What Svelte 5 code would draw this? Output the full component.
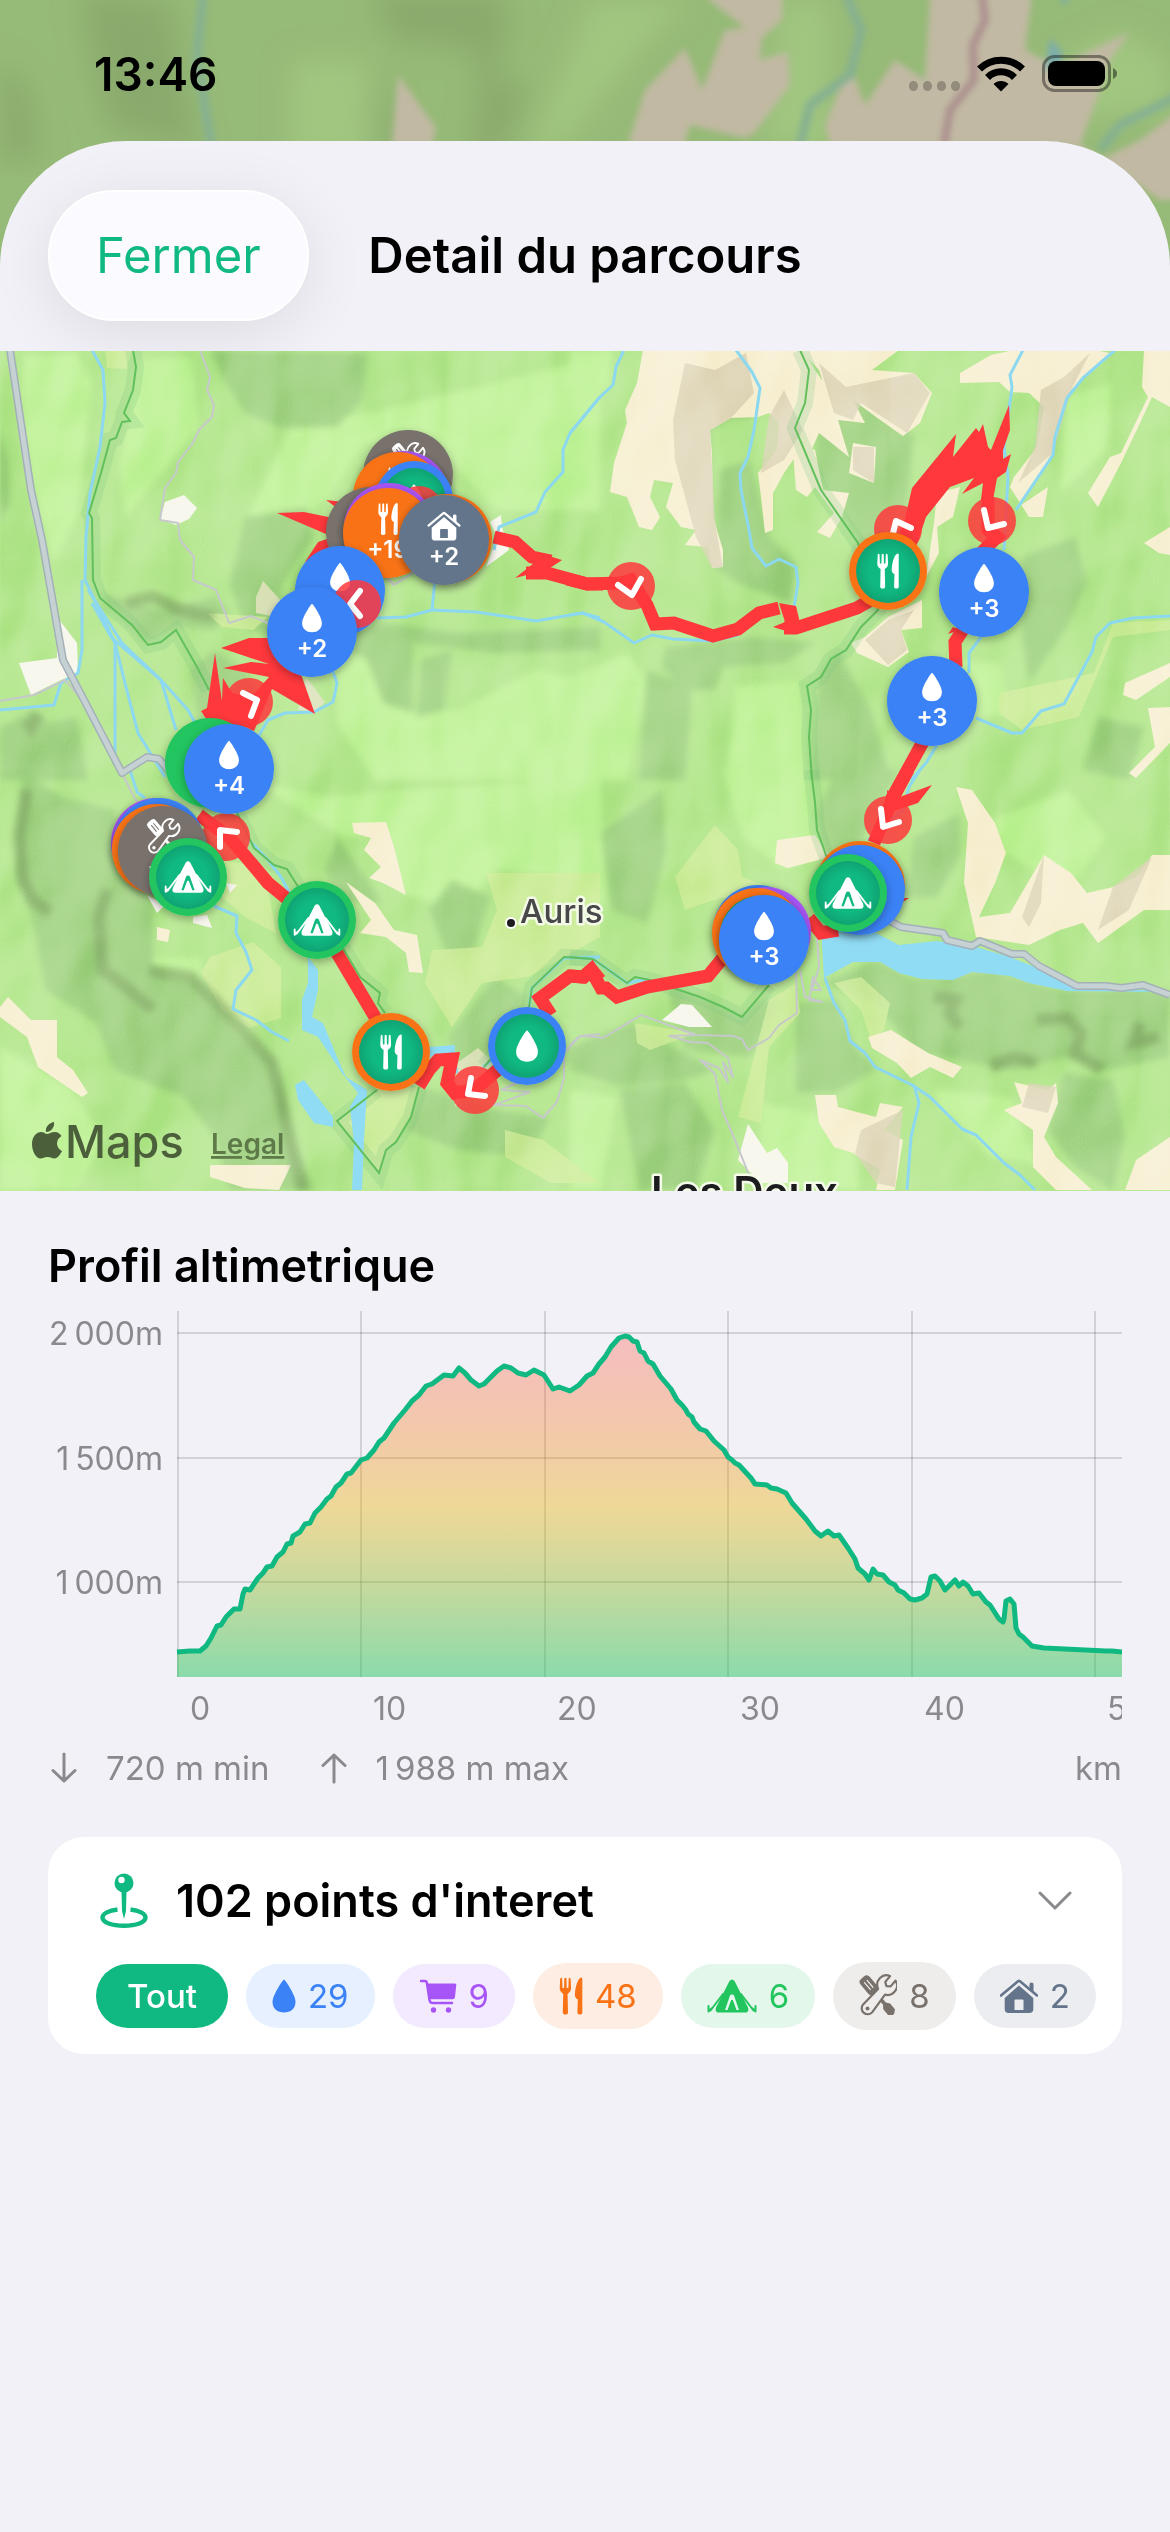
<script>
  // The map is surveyed in four tiles; each one has its own origin on the map
  // and a common grid of 1568 x 1260 survey units.
  const tiles = {
    nw: [0, -1],
    ne: [570, -1],
    sw: [0, 419],
    se: [570, 419]
  };

  function project(tile, x, y) {
    const [ox, oy] = tiles[tile];
    return [Math.round(ox + (x * 600) / 1568), Math.round(oy + y / 3)];
  }

  function points(tile, list) {
    return list
      .split(' ')
      .map((pair) => project(tile, ...pair.split(',').map(Number)).join(','))
      .join(' ');
  }

  const relief = {
    dark: [
      ['nw', '550,0 960,10 945,150 880,230 740,235 640,190 590,100'],
      ['nw', '640,500 800,470 820,560 740,700 720,860 640,830 600,700'],
      ['nw', '0,1130 80,1085 130,1120 200,1100 230,1290 0,1290'],
      ['nw', '820,850 1000,820 1200,850 1568,830 1568,900 1300,910 1080,880 1080,1090 1000,1060 960,930'],
      ['nw', '260,730 420,780 560,740 600,790 560,840 460,830 388,880 330,820'],
      ['nw', '0,240 20,330 25,460 0,520'],
      ['nw', '500,960 560,900 640,960 700,1100 620,1180 520,1120'],
      ['nw', '1100,930 1180,900 1160,1080 1090,1100'],
      ['ne', '270,60 400,10 470,120 480,200 420,205 365,240 375,500 300,400'],
      ['ne', '390,360 470,330 520,560 590,640 580,760 440,700 380,650'],
      ['ne', '650,30 760,130 900,260 800,290 800,400 740,380 760,580 640,370'],
      ['ne', '1240,0 1370,0 1300,120 1260,310 1180,400 1220,290'],
      ['ne', '250,890 480,860 640,880 560,940 400,950 380,1020 300,1020 240,950'],
      ['ne', '200,960 320,1010 300,1290 180,1290'],
      ['ne', '650,980 700,900 790,1090 840,1290 630,1290'],
      ['ne', '750,300 900,250 880,480 760,580 720,400'],
      ['ne', '1180,620 1320,560 1350,700 1300,830 1200,1000 1180,860'],
      ['ne', '1380,1100 1500,1130 1460,1290 1340,1260'],
      ['sw', '60,0 160,80 300,120 310,300 400,400 400,600 520,640 620,790 720,890 760,1100 820,1260 600,1260 560,1100 480,980 300,900 250,760 120,660 80,430 45,310'],
      ['sw', '420,860 560,820 680,900 700,1000 560,1060 480,960'],
      ['sw', '880,200 1000,400 900,400 850,300'],
      ['sw', '1180,330 1280,380 1240,540 1170,560 1120,420'],
      ['sw', '1170,800 1290,620 1380,680 1300,830 1200,900'],
      ['sw', '1100,950 1300,1020 1440,1040 1380,1160 1200,1140 1060,1080'],
      ['se', '660,640 800,570 900,630 1100,600 1280,660 1568,660 1568,860 1400,900 1300,860 1160,900 900,850 800,700'],
      ['se', '590,700 700,690 740,820 800,900 690,970 590,970'],
      ['se', '80,190 240,60 250,240 200,460 110,420'],
      ['se', '250,640 450,740 500,690 560,690 470,860 300,840'],
      ['se', '0,830 160,760 300,850 380,900 300,930 140,950 0,900'],
      ['se', '130,960 300,940 380,1080 330,1260 180,1260'],
      ['se', '1290,910 1420,930 1450,1100 1420,1260 1320,1190 1250,1080'],
      ['se', '900,200 1020,130 1020,260 960,380 880,380'],
      ['se', '700,0 860,0 760,210 660,250 640,130']
    ],
    light: [
      ['nw', '760,230 1000,180 1568,20 1568,480 1300,480 1150,300 950,280 860,440 720,560 640,520'],
      ['nw', '880,880 1060,880 1070,1090 1200,1080 1400,960 1568,1000 1568,1290 980,1290 880,1120'],
      ['nw', '60,20 200,10 240,100 200,500 140,640 60,300'],
      ['nw', '360,30 500,20 520,230 400,400 330,500 310,350'],
      ['ne', '0,0 110,0 100,110 0,240'],
      ['ne', '0,980 150,910 200,990 150,1290 80,1290 0,1200'],
      ['ne', '430,1010 600,990 620,1290 410,1290'],
      ['ne', '1300,140 1420,100 1400,300 1280,430'],
      ['ne', '900,920 1120,940 1150,1090 1060,1100'],
      ['sw', '640,20 850,80 1050,60 1568,20 1568,330 1300,300 1200,420 1050,370 1000,190 900,200'],
      ['sw', '300,560 520,560 560,760 460,820 330,740'],
      ['sw', '0,830 180,950 270,1100 200,1260 0,1260'],
      ['se', '10,0 80,20 90,400 0,440'],
      ['se', '400,0 630,0 660,240 560,300 450,200'],
      ['se', '1100,150 1300,60 1400,200 1300,370 1130,240'],
      ['se', '0,960 120,980 80,1260 0,1260'],
      ['se', '950,960 1150,980 1220,1180 1100,1160 960,1000'],
      ['se', '500,1000 640,1030 740,1140 760,1260 500,1260']
    ]
  };

  const fields = [
    ['nw', '275,0 345,0 330,58 280,55'],
    ['sw', '550,560 660,515 735,590 735,745 650,775 580,720 525,610'],
    ['sw', '1270,310 1568,310 1568,500 1380,620 1260,640 1180,770 1110,640 1130,540 1260,530 1300,420'],
    ['sw', '450,250 690,290 720,490 640,440'],
    ['sw', '1320,1080 1420,1110 1568,1240 1440,1240 1320,1160'],
    ['sw', '880,1052 985,960 1095,950 1075,1040 1035,1115 1010,1140 990,1208'],
    ['se', '275,320 380,165 440,240 450,320 520,350 490,480 400,380 300,420'],
    ['se', '480,860 520,690 590,640 600,730 520,830 500,1060 440,1040'],
    ['se', '690,640 760,620 835,700 820,780 790,820 760,720'],
    ['se', '170,760 330,790 210,840 175,820'],
    ['ne', '1120,1030 1370,970 1420,820 1568,810 1568,840 1420,860 1330,1100 1180,1140 1120,1090'],
    ['nw', '540,790 700,800 660,840 580,830']
  ];

  const scree = [
    ['ne', '190,0 610,0 640,60 700,160 770,220 700,210 730,320 650,250 620,330 600,300 560,370 530,430 530,540 510,550 500,440 490,370 540,300 545,220 520,190 490,200 420,205 365,240 370,310 375,500 400,600 400,650 370,655 360,590 300,585 330,540 290,530 250,470 270,400 220,390 210,440 235,500 215,540 180,530 150,440 105,425 115,340 150,220 145,180 175,100'],
    ['ne', '600,0 860,0 790,60 900,70 945,130 915,220 870,258 800,200 740,150 770,220 690,200 650,60'],
    ['ne', '580,270 640,300 660,420 730,430 710,500 680,565 645,545 690,490 640,410 620,440 590,420'],
    ['ne', '740,280 800,290 795,400 730,370'],
    ['ne', '1020,70 1100,15 1160,0 1370,0 1410,10 1310,120 1270,230 1262,310 1170,470 1250,410 1235,500 1200,500 1150,410 1160,380 1220,290 1240,170 1200,130 1150,125 1120,95 1020,100'],
    ['ne', '1500,0 1568,0 1568,170 1520,140 1490,220 1440,340 1380,470 1355,430 1410,320 1440,310 1510,140 1495,110'],
    ['ne', '1500,580 1568,530 1568,615 1540,610'],
    ['ne', '960,430 1020,410 1000,500 960,530 965,610 930,680 950,520'],
    ['ne', '770,860 830,800 920,750 920,835 865,840 885,905 830,950 750,910 735,880'],
    ['ne', '1450,1000 1568,940 1568,980 1480,1050 1445,1035'],
    ['ne', '1510,1075 1568,1070 1568,1180 1480,1285 1460,1270 1530,1190'],
    ['se', '1010,50 1050,60 1110,160 1140,250 1110,340 1070,440 1150,430 1240,255 1310,310 1350,370 1420,350 1480,320 1520,255 1568,255 1568,420 1500,420 1380,520 1340,460 1280,480 1200,525 1060,500 1030,340 1040,160'],
    ['se', '540,210 640,195 680,260 570,295 535,280'],
    ['se', '780,800 840,780 935,850 1025,890 1000,925 940,890 890,925 855,880 790,835'],
    ['se', '640,975 695,975 700,1010 800,1040 810,1000 870,1010 820,1080 870,1110 850,1260 800,1260 810,1200 740,1150 690,1130 650,1060'],
    ['se', '1160,935 1250,960 1270,940 1275,1000 1240,1100 1270,1160 1365,1260 1270,1260 1210,1190 1210,1080 1135,1020 1180,1000'],
    ['se', '1480,1170 1568,1100 1568,1260 1450,1260'],
    ['sw', '920,160 1010,155 1030,230 1060,375 1000,340 965,325 995,290 950,240 970,205 925,190'],
    ['sw', '905,335 980,400 1030,480 1090,495 1105,610 1070,605 1060,550 1010,500 940,490 970,450'],
    ['sw', '410,470 445,480 440,515 410,510'],
    ['sw', '550,1185 760,1185 730,1260 640,1255 550,1220'],
    ['sw', '20,680 80,750 150,750 150,860 190,900 230,970 215,980 100,890 70,800 0,740 0,710']
  ];

  const screeShade = [
    ['ne', '300,40 380,60 460,10 480,130 420,205 365,240 380,520 400,650 370,655 330,560 275,330 270,210'],
    ['ne', '650,40 720,110 900,70 940,130 880,250 760,160 740,210 690,190'],
    ['ne', '1230,120 1290,80 1360,10 1310,120 1262,310 1170,400 1215,290'],
    ['ne', '520,200 560,120 610,240 560,330 500,370'],
    ['ne', '740,290 795,290 795,400 740,360'],
    ['ne', '770,870 830,810 900,780 865,840 880,900 830,945'],
    ['se', '1180,440 1240,255 1230,400 1200,470'],
    ['se', '1420,350 1520,260 1460,420 1380,480'],
    ['se', '760,1080 870,1020 850,1250 800,1240 745,1150'],
    ['se', '1200,940 1270,950 1250,1030 1180,1010']
  ];

  const ridges = [
    ['sw', '70,60 60,120 50,200 60,330 85,390 130,430'],
    ['sw', '280,360 260,440 270,600 330,650 400,720'],
    ['sw', '390,600 500,620 560,690 640,790 710,880 740,1010 790,1260'],
    ['se', '950,680 1010,690 990,730 1020,770'],
    ['se', '1220,750 1300,745 1335,790 1320,850 1390,900'],
    ['se', '1100,890 1160,860 1220,880'],
    ['se', '1490,760 1470,820 1540,800'],
    ['nw', '330,760 400,740 470,780 560,800'],
    ['nw', '70,1110 80,1130 100,1090']
  ];

  const villages = [
    ['nw', '430,455 480,435 515,475 495,508 460,525 418,508'],
    ['nw', '50,940 150,925 150,800 200,880 205,970 160,990 80,1035'],
    ['nw', '1280,515 1310,495 1312,530 1330,600 1270,650 1300,560'],
    ['sw', '385,375 430,405 410,430'],
    ['sw', '505,440 540,435 555,475 505,460'],
    ['sw', '590,340 620,345 600,370'],
    ['se', '240,750 290,702 320,705 370,772 310,770'],
    ['se', '465,1062 515,1150 540,1135 570,1180 570,1240 500,1240 440,1170']
  ];

  const hamlets = [
    ['nw', '780,1080 800,980 850,1055 820,1085'],
    ['nw', '670,740 688,692 740,760 720,800 670,790'],
    ['sw', '1195,880 1250,835 1290,880 1240,940 1190,1010']
  ];

  const lakes = [
    ['se', '655,470 800,490 860,525 960,512 1060,530 1150,560 1320,640 1450,655 1540,665 1300,663 1200,640 1150,618 1050,605 1000,630 920,628 860,610 810,575 740,575 665,625'],
    ['sw', '805,560 830,600 830,660 815,740 845,760 880,860 905,920 960,960 950,1110 945,1260 920,1260 925,1120 915,1010 935,970 895,910 830,800 790,780 790,690 805,640'],
    ['sw', '770,945 795,930 870,1040 870,1070 820,1060 780,990'],
    ['sw', '1120,830 1190,826 1190,850 1120,860']
  ];

  const rivers = [
    ['nw', '240,0 268,60 275,160 262,290 235,430 225,560 222,690 300,880 300,1240'],
    ['nw', '215,690 215,900 205,970 160,1000 140,1065 0,1080'],
    ['nw', '240,760 290,860 420,990 460,1140'],
    ['nw', '230,720 320,880 420,990 490,1080 530,1160'],
    ['nw', '300,880 330,1010 360,1150 430,1280'],
    ['nw', '1568,140 1490,250 1470,300 1470,365 1425,425 1400,485 1305,530 1290,600'],
    ['nw', '985,805 1060,800 1130,780 1245,787 1400,812 1520,790 1568,805'],
    ['nw', '1137,690 1130,780'],
    ['nw', '870,965 880,1000 870,1055 820,1085 745,1090 700,1110 675,1160'],
    ['ne', '140,0 120,50 112,105 75,145 0,250'],
    ['ne', '435,0 475,65 497,115 480,240 465,320 445,370 447,420 468,540 475,595 512,648 545,628 590,652 595,700 585,770'],
    ['ne', '0,795 35,790 90,815 168,878 215,855 270,868 375,873 440,855'],
    ['ne', '1185,0 1150,75 1155,110 1135,290 1145,380 1135,600'],
    ['ne', '1423,0 1340,85 1300,145 1268,260 1262,315 1165,480'],
    ['ne', '1075,860 1042,910 1042,970'],
    ['ne', '1568,797 1470,805 1412,820 1375,860 1365,905 1290,1062 1230,1082 1180,1150 1155,1150 1060,1105'],
    ['ne', '960,1185 930,1240 890,1290'],
    ['se', '915,0 885,50 870,120 780,210'],
    ['se', '667,625 690,700 718,750 732,812 770,850 798,892 895,945 940,980 1025,1078 1062,1095 1135,1180 1175,1215 1215,1260'],
    ['se', '898,945 912,1000 890,1100 880,1260'],
    ['sw', '340,0 358,65 380,85'],
    ['sw', '560,408 620,437 617,490 642,545 658,600 618,660 608,718 670,750 710,785 755,812'],
    ['sw', '650,210 700,270 735,320 755,365'],
    ['sw', '1383,710 1390,655 1475,565 1568,562'],
    ['se', '0,560 60,567 150,638 200,628'],
    ['sw', '1180,840 1195,910'],
    ['sw', '1285,870 1262,890']
  ];

  const borders = [
    ['nw', '348,0 355,50 348,120 325,190 340,212 318,215 302,265 288,270 265,370 232,490 240,505 242,690 262,745 345,825 388,886 420,875 460,840 515,950 545,1020'],
    ['ne', '602,0 625,60 615,160 588,235 655,420 752,580 805,780 760,830 720,900 683,928 655,980 620,1008 630,1080 625,1160 632,1290'],
    ['se', '630,0 640,95 645,180 672,265'],
    ['sw', '620,130 665,235 715,285 750,298 775,345 850,480 900,540 940,620 992,668 988,700 1005,730'],
    ['sw', '985,960 880,1052 990,1208 1010,1140 1035,1115 1075,1040 1095,950'],
    ['sw', '1265,890 1280,870 1383,710 1390,655 1475,560 1550,567'],
    ['se', '0,560 60,567 150,638 170,622 210,630 300,665 340,682 400,710 450,742 520,645']
  ];

  const tracks = [
    ['nw', '522,0 550,80 540,120 558,165 553,200 520,240 505,280 465,335 460,370 430,415 418,510 465,520 470,570 508,620 505,690 565,720 598,818 655,797 700,820'],
    ['nw', '0,1052 90,1035 170,990 205,1035'],
    ['nw', '320,1270 345,1330 365,1370'],
    ['nw', '1010,680 1030,705 1080,670'],
    ['sw', '1568,792 1515,797 1475,850 1475,925 1455,995 1420,1045 1375,1008 1290,1005 1385,965 1310,960 1380,925'],
    ['se', '0,825 25,797 70,802 85,805 185,735 330,795 425,798 450,808 465,840 520,805 545,765 592,728 590,600'],
    ['se', '330,795 260,797 315,817 360,820 412,865 425,920 400,875 412,935 390,895 340,870 380,912 397,1020 430,1110 468,1215'],
    ['se', '645,500 650,590 632,660 655,660 635,620 625,690 658,697 615,680 600,600']
  ];

  const roads = [
    ['nw', '25,0 80,420 110,570 165,930 220,1050 320,1268 385,1222 415,1228 440,1260'],
    ['se', '830,450 865,470 975,490 985,510 1050,528 1072,512 1155,552 1187,553 1225,588 1325,647 1400,647 1440,655 1497,645 1568,675']
  ];

  const route = [
    ['nw', '1290,562 1345,575 1390,620 1440,632'],
    ['nw', '1375,668 1430,670 1535,703 1575,702'],
    ['ne', '-8,687 45,703 130,700 160,690 200,765 222,822 272,818 375,858 440,838 495,790 545,775'],
    ['ne', '560,833 590,835 750,775 800,740'],
    ['ne', '868,580 900,500'],
    ['ne', '1092,440 1092,540 1115,560 1075,610'],
    ['ne', '1030,835 1007,875 1008,950'],
    ['ne', '925,1170 840,1350'],
    ['se', '882,0 845,85 795,220'],
    ['se', '700,480 655,490 625,445'],
    ['se', '410,550 360,618 200,650 122,680 95,655 80,655 55,600 35,622 0,617'],
    ['sw', '1568,630 1547,600 1525,620 1490,617 1412,685 1440,735'],
    ['sw', '1310,890 1240,960 1190,968 1168,940 1180,868 1145,870 1120,900 1095,947'],
    ['sw', '1010,800 980,740 880,550'],
    ['sw', '760,395 700,338 600,205 520,135']
  ];

  // Hairpins where the track doubles back on itself.
  const hairpins = [
    ['nw', '1400,605 1468,630 1430,660 1345,684 1395,640'],
    ['ne', '545,760 590,768 603,830 590,853 530,830 563,815'],
    ['ne', '872,520 895,415 1008,253 1002,322 1062,235 1068,245 1080,223 1092,290 1100,300 1148,165 1150,240 1132,300 1132,328 1152,313 1140,365 1115,385 1106,450 1075,450 1078,400 1025,432 1055,385 992,410 930,500 905,590 870,560'],
    ['se', '828,60 855,85 945,46 910,100 830,130'],
    ['nw', '525,1083 540,1075 562,908 580,1052 584,983 605,1030 655,1040 702,980 583,955 655,935 702,942 577,895 650,863 740,863 790,980 822,1092 710,1018 665,1142 640,1130 540,1110'],
    ['nw', '725,490 795,485 870,505 870,560'],
    ['nw', '852,450 900,455 880,475'],
    ['nw', '870,560 830,575 797,635 870,600'],
    ['ne', '1000,830 988,853 1020,840'],
    ['se', '870,385 885,385 870,395']
  ];

  const green = '#10b981';
  const blue = '#3b82f6';
  const orange = '#f97316';
  const purple = '#a855f7';
  const stone = '#78716c';
  const slate = '#64748b';
  const camp = '#22c55e';

  const pins = [
    ['cluster', 'nw', 1065, 374, stone, 'tools', ''],
    ['cluster', 'nw', 1055, 439, purple, '', ''],
    ['cluster', 'nw', 1041, 440, orange, 'fork', ''],
    ['poi', 'nw', 1083, 449, blue, 'drop', ''],
    ['arrow', 'nw', 1095, 480, '', '', '1080,510 1080,490 1095,480'],
    ['cluster', 'nw', 969, 545, stone, '', ''],
    ['cluster', 'nw', 1017, 535, purple, '', ''],
    ['cluster', 'nw', 1013, 549, orange, 'fork', '+19'],
    ['cluster', 'nw', 1168, 567, orange, '', ''],
    ['cluster', 'nw', 1161, 569, slate, 'house', '+2'],
    ['cluster', 'nw', 888, 722, blue, 'drop', ''],
    ['arrow', 'nw', 933, 762, '', '', '942,722 915,762 942,797'],
    ['cluster', 'nw', 815, 846, blue, 'drop', '+2'],
    ['arrow', 'nw', 652, 1055, '', '', '634,1028 672,1049 656,1098'],
    ['cluster', 'nw', 548, 1238, camp, '', ''],
    ['arrow', 'sw', 590, 200, '', '', '620,186 574,181 574,232'],
    ['cluster', 'nw', 598, 1256, blue, 'drop', '+4'],
    ['cluster', 'sw', 407, 219, purple, '', ''],
    ['cluster', 'sw', 415, 220, blue, '', ''],
    ['cluster', 'sw', 411, 236, orange, '', ''],
    ['cluster', 'sw', 425, 242, stone, 'tools', '+5'],
    ['poi', 'sw', 491, 321, camp, 'tent', ''],
    ['poi', 'sw', 828, 450, camp, 'tent', ''],
    ['poi', 'sw', 1022, 845, orange, 'fork', ''],
    ['arrow', 'sw', 1242, 960, '', '', '1231,923 1223,973 1268,979'],
    ['poi', 'sw', 1378, 828, blue, 'drop', ''],
    ['cluster', 'se', 490, 481, blue, '', ''],
    ['cluster', 'se', 512, 487, purple, '', ''],
    ['cluster', 'se', 489, 489, orange, '', ''],
    ['poi', 'se', 495, 495, '#0c9a70', '', ''],
    ['cluster', 'se', 507, 510, blue, 'drop', '+3'],
    ['arrow', 'se', 831, 150, '', '', '812,118 819,171 860,157'],
    ['cluster', 'se', 757, 348, orange, '', ''],
    ['cluster', 'se', 758, 360, blue, '', ''],
    ['poi', 'se', 726, 369, camp, 'tent', ''],
    ['arrow', 'ne', 857, 537, '', '', '843,550 853,513 892,535'],
    ['poi', 'ne', 831, 663, orange, 'fork', ''],
    ['arrow', 'ne', 1103, 513, '', '', '1083,480 1092,533 1133,521'],
    ['cluster', 'ne', 1082, 726, blue, 'drop', '+3'],
    ['cluster', 'ne', 946, 1053, blue, 'drop', '+3'],
    ['arrow', 'ne', 160, 708, '', '', '125,704 163,734 185,688']
  ].map(([kind, tile, x, y, color, icon, extra]) => {
    const [cx, cy] = project(tile, x, y);
    return { kind, tile, cx, cy, color, icon, extra };
  });

  const profileTrace =
    '177,1652 190,1651 200,1651 206,1646 211,1638 217,1626 221,1625 226,1617 234,1609 240,1609 243,1594 245,1589 250,1590 258,1578 263,1573 267,1567 272,1566 277,1557 283,1552 287,1544 291,1543 293,1536 300,1532 305,1524 310,1523 315,1513 321,1507 327,1499 331,1496 336,1487 341,1483 347,1474 351,1473 361,1460 367,1458 374,1450 379,1442 384,1438 394,1423 405,1410 412,1401 419,1395 426,1386 432,1384 444,1375 453,1376 459,1368 465,1373 471,1380 479,1386 484,1384 497,1371 504,1366 511,1368 518,1373 526,1375 534,1370 544,1375 553,1389 559,1387 570,1391 579,1385 587,1376 593,1373 599,1364 605,1357 611,1347 619,1338 625,1336 629,1337 633,1341 637,1342 640,1351 644,1353 648,1361 653,1364 660,1376 671,1389 677,1400 682,1405 686,1410 688,1414 692,1417 694,1422 700,1429 706,1431 714,1441 724,1450 728,1457 732,1460 735,1463 739,1465 751,1478 755,1484 767,1485 771,1488 777,1489 786,1493 792,1503 806,1519 815,1531 821,1536 828,1531 834,1536 839,1535 848,1548 855,1559 858,1568 865,1574 869,1580 873,1569 877,1574 883,1575 889,1582 895,1585 898,1590 904,1593 910,1599 915,1600 922,1598 927,1594 931,1577 935,1576 940,1581 945,1590 955,1580 959,1586 963,1582 968,1586 973,1594 979,1593 986,1602 990,1605 999,1619 1003,1622 1004,1619 1006,1601 1010,1599 1014,1604 1016,1628 1019,1634 1023,1637 1032,1646 1044,1648 1106,1651 1112,1651 1122,1652';

  const profile = profileTrace
    .split(' ')
    .map((pair) => {
      const [x, y] = pair.split(',').map(Number);
      return `${x - 48},${y - 1311}`;
    })
    .join(' ');

  const elevations = [
    ['2\u2009000m', 22],
    ['1\u2009500m', 147],
    ['1\u2009000m', 271]
  ];

  const distances = [0, 10, 20, 30, 40, 50];

  const filters = [
    { icon: 'drop', count: 29, label: "Points d'eau", tone: 'water', w: 24, h: 34 },
    { icon: 'cart', count: 9, label: 'Commerces', tone: 'shop', w: 38, h: 34 },
    { icon: 'fork', count: 48, label: 'Restaurants', tone: 'food', w: 24, h: 42 },
    { icon: 'tent', count: 6, label: 'Campings', tone: 'camp', w: 50, h: 34 },
    { icon: 'tools', count: 8, label: 'Ateliers', tone: 'repair', w: 38, h: 44 },
    { icon: 'house', count: 2, label: 'Hébergements', tone: 'lodging', w: 38, h: 34 }
  ];
</script>

{#snippet glyph(name, back)}
  {#if name === 'drop'}
    <path fill="currentColor" d="M0-16.5C1-16.5 11.5-1 11.5 6C11.5 12.5 6.5 16.5 0 16.5S-11.5 12.5-11.5 6C-11.5-1-1-16.5 0-16.5Z" />
  {:else if name === 'fork'}
    <g fill="currentColor">
      <path d="M-11.3-8L-10.8-17.5Q-9.8-19-8.9-17.5L-8.5-8H-6.9L-6.7-17.5Q-5.6-19-4.5-17.5L-4.3-8H-2.7L-2.3-17.5Q-1.4-19-.4-17.5L.1-8C.1-5-1.5-3.5-3.4-2L-3 16.5C-3 19.2-8.2 19.2-8.2 16.5L-7.8-2C-9.7-3.5-11.3-5-11.3-8Z" />
      <path d="M11.3-17V16.5C11.3 19.2 6.4 19.2 6.4 16.5L6.8 3.5C4.5 2 3.8 1 3.9-2C4.2-9 7-18.5 10.5-18.5Q11.3-18.5 11.3-17Z" />
    </g>
  {:else if name === 'tent'}
    <path
      fill="currentColor"
      fill-rule="evenodd"
      d="M-2.5-15Q0-18 2.5-15L16 11.5Q17.5 16.5 13 16.5H-13Q-17.5 16.5-16 11.5ZM0-1.5Q-1.5-1.5-2-.5L-7 14H-4.5L-.8 4H.8L4.5 14H7L2-.5Q1.500-1.5 0-1.5Z"
    />
    <path fill="none" stroke="currentColor" stroke-width="2" stroke-linecap="round" stroke-linejoin="round" d="M-9-2L-21.5 14.5M9-2L21.5 14.5M-23.5 10V15.5L-20 12M23.5 10V15.5L20 12" />
  {:else if name === 'house'}
    <path fill="none" stroke="currentColor" stroke-width="2.6" stroke-linecap="round" stroke-linejoin="round" d="M-18-.5L-1-14.8Q0-15.6 1-14.8L18-.5" />
    <path
      fill="currentColor"
      fill-rule="evenodd"
      d="M10.5-12Q10.5-13.5 12.5-13.5T14.5-12V-4L10.5-7.5ZM0-10.5L14.3 2V13Q14.3 17 10.3 17H-10.3Q-14.3 17-14.3 13V2ZM-3.5 3.5Q-4.5 3.5-4.5 4.5V14H4.5V4.5Q4.5 3.5 3.5 3.5Z"
    />
  {:else if name === 'cart'}
    <path fill="none" stroke="currentColor" stroke-width="2.4" stroke-linecap="round" stroke-linejoin="round" d="M-17-15H-13Q-11.5-15-11.2-13.5L-8.5 4Q-8 7-5.5 7H14" />
    <path fill="currentColor" d="M-11.5-12.5H17Q18.5-12.5 18.3-11L17 1Q16.8 3.3 14.5 3.3H-8.5Z" />
    <circle cx="-4.5" cy="14" r="2.7" fill="currentColor" />
    <circle cx="10.5" cy="14" r="2.7" fill="currentColor" />
  {:else if name === 'tools'}
    <g transform="rotate(-40)">
      <rect x="-6" y="-24" width="12" height="20" rx="4" fill="currentColor" />
      <path d="M-1.7-19V-10M1.7-19V-10" stroke={back} stroke-width="1.2" stroke-linecap="round" />
      <path fill="currentColor" d="M-1.8-5H1.8V10L4.5 13.5V21L1 24H-1L-4.5 21V13.5L-1.8 10Z" />
    </g>
    <path
      transform="rotate(40)"
      fill={back}
      stroke="currentColor"
      stroke-width="2.2"
      stroke-linejoin="round"
      d="M-3.5-23C-11.5-21-12.5-9.5-4.5-5.5L-6 16A6 6 0 0 0 6 16L4.5-5.5C12.5-9.5 11.5-21 3.5-23V-15.5L0-13L-3.5-15.5Z"
    />
    <circle cx="-10.5" cy="12.5" r="2" fill="currentColor" />
  {/if}
{/snippet}

<div class="screen">
  <div class="backdrop">
    <svg class="backdrop-map" viewBox="0 0 1170 320" preserveAspectRatio="xMidYMin slice" aria-hidden="true">
      <defs>
        <filter id="soft"><feGaussianBlur stdDeviation="3" /></filter>
        <filter id="softer"><feGaussianBlur stdDeviation="14" /></filter>
      </defs>
      <rect width="1170" height="320" fill="#96ba77" />
      <g filter="url(#softer)">
        <path fill="#8aaa6d" d="M80-10L170 0L200 150L110 130L90 60ZM370-10H500L510 20L490 100L470 50L390 40ZM380 60L400 150L375 150ZM0 60L30 90L40 160H0ZM480 70L530 90L500 160H470Z" />
        <path fill="#a0c680" d="M290 60H370L370 160H290ZM590 0H690L650 40L560 150H530ZM780 0H830L830 160L760 140ZM1060 60L1120 30L1170 60V110L1080 120Z" />
      </g>
      <g filter="url(#soft)">
        <path fill="#c1b9a3" d="M703-5H783L782 20L762 38L760 60L788 52L790 85L755 132L745 138L690 125L684 145H628L645 90L685 48L702 90L725 30L745 28ZM930-5H1032L1025 50L1040 58L1060 65L1130 32L1110 60L1100 90L1080 145L1160 200H1180V110L1140 140L1090 165L1070 145H830L825 125L850 65L865 105L895 60L925 80ZM398 75L436 128L432 145H392Z" />
        <path fill="none" stroke="#86b191" stroke-width="9" d="M203-5L197 55L211 145M846-5L861 30L850 75L810 105L800 145M1180 95L1120 125L1100 150" />
        <path fill="none" stroke="#ac8d8e" stroke-width="8" d="M982-5L985 20L973 45L974 80L950 110L944 145" />
        <path fill="#7cadab" d="M1050 38L1062 52L1060 72L1045 70ZM1060-5H1070L1064 6Z" />
      </g>
    </svg>
    <header class="status">
      <span class="time">13:46</span>
      <span class="signals">
        <svg class="dots" viewBox="0 0 51 36" aria-hidden="true">
          <path d="M4.5 29.5V30.5M18.5 29.5V30.5M32.5 29.5V30.5M46.5 29.5V30.5" stroke="#000" stroke-opacity=".24" stroke-width="9" stroke-linecap="round" />
        </svg>
        <svg class="wifi" viewBox="0 0 50 36" aria-hidden="true">
          <path fill="none" stroke="#000" stroke-width="7" d="M3.5 13A30.5 30.5 0 0 1 46.5 13M11.5 21.5A19 19 0 0 1 38.5 21.5" />
          <path d="M25 35.5L17.5 28A10.6 10.6 0 0 1 32.5 28Z" />
        </svg>
        <svg class="battery" viewBox="0 0 76 38" aria-hidden="true">
          <rect x="1.5" y="1.5" width="66" height="34" rx="11" fill="none" stroke="#000" stroke-opacity=".4" stroke-width="3" />
          <rect x="6" y="6" width="57" height="25" rx="8" />
          <path d="M71 13Q75 15 75 18.5T71 24Z" fill-opacity=".45" />
        </svg>
      </span>
    </header>
  </div>

  <main class="sheet">
    <div class="bar">
      <button class="close" type="button">Fermer</button>
      <h1>Detail du parcours</h1>
    </div>

    <svg class="map" viewBox="0 0 1170 840" role="img" aria-label="Carte du parcours">
      <defs>
        <filter id="shade" x="-5%" y="-5%" width="110%" height="110%"><feGaussianBlur stdDeviation="3" /></filter>
        <filter id="ridge-blur" x="-5%" y="-5%" width="110%" height="110%"><feGaussianBlur stdDeviation="3" /></filter>
        <filter id="hills" x="0" y="0" width="100%" height="100%" color-interpolation-filters="sRGB">
          <feTurbulence type="fractalNoise" baseFrequency=".009 .006" numOctaves="3" seed="11" />
          <feDiffuseLighting surfaceScale="32" diffuseConstant="1" lighting-color="#fff">
            <feDistantLight azimuth="225" elevation="34" />
          </feDiffuseLighting>
        </filter>
        <filter id="drop-shadow" x="-30%" y="-30%" width="160%" height="160%">
          <feDropShadow dx="0" dy="3" stdDeviation="4" flood-color="#000" flood-opacity=".3" />
        </filter>
        <radialGradient id="poi-fill">
          <stop offset=".6" stop-color="#10b981" />
          <stop offset="1" stop-color="#0fa373" />
        </radialGradient>
      </defs>

      <rect width="1170" height="840" fill="#b8e893" />
      <g filter="url(#shade)">
        {#each relief.light as [tile, list]}
          <polygon fill="#c4f39e" points={points(tile, list)} />
        {/each}
        {#each relief.dark as [tile, list]}
          <polygon fill="#a6d588" points={points(tile, list)} />
        {/each}
      </g>
      {#each fields as [tile, list]}
        <polygon fill="#d3eea0" fill-opacity=".8" points={points(tile, list)} />
      {/each}
      {#each scree as [tile, list]}
        <polygon fill="#f7f0d4" points={points(tile, list)} />
      {/each}
      {#each screeShade as [tile, list]}
        <polygon fill="#ddd6ba" fill-opacity=".8" points={points(tile, list)} />
      {/each}
      {#each hamlets as [tile, list]}
        <polygon fill="#dde4bd" points={points(tile, list)} />
      {/each}
      <g filter="url(#ridge-blur)">
        {#each ridges as [tile, list]}
          <polyline class="ridge" points={points(tile, list)} />
        {/each}
      </g>
      <rect class="hills" width="1170" height="840" filter="url(#hills)" />
      {#each villages as [tile, list]}
        <polygon fill="#f7f7ee" points={points(tile, list)} />
      {/each}

      {#each borders as [tile, list]}
        <polyline class="border-band" points={points(tile, list)} />
      {/each}
      {#each lakes as [tile, list]}
        <polygon fill="#90dcf4" points={points(tile, list)} />
      {/each}
      {#each rivers as [tile, list]}
        <polyline class="river" points={points(tile, list)} />
      {/each}
      {#each borders as [tile, list]}
        <polyline class="border" points={points(tile, list)} />
      {/each}
      {#each tracks as [tile, list]}
        <polyline class="track" points={points(tile, list)} />
      {/each}
      {#each roads as [tile, list]}
        <polyline class="road-edge" points={points(tile, list)} />
        <polyline class="road" points={points(tile, list)} />
      {/each}

      <circle cx="511" cy="572" r="5" fill="#1c1c1e" stroke="#fff" stroke-width="2" />
      <text class="place" x="520" y="572">Auris</text>
      <text class="place town" x="651" y="856">Les Deux</text>

      {#each route as [tile, list]}
        <polyline class="route" points={points(tile, list)} />
      {/each}
      {#each hairpins as [tile, list]}
        <polygon fill="#ff383c" points={points(tile, list)} />
      {/each}

      {#each pins as pin}
        {#if pin.kind === 'arrow'}
          <circle cx={pin.cx} cy={pin.cy} r="24" fill="#ff383c" fill-opacity=".85" />
          <polyline class="heading" points={points(pin.tile, pin.extra)} />
        {:else if pin.kind === 'cluster'}
          <g class="pin" transform="translate({pin.cx} {pin.cy})">
            <circle r="45" fill={pin.color} filter="url(#drop-shadow)" />
            <g transform="translate(0 -14) scale(.86)">{@render glyph(pin.icon, pin.color)}</g>
            {#if pin.extra}<text class="more" y="25">{pin.extra}</text>{/if}
          </g>
        {:else}
          <g class="pin" transform="translate({pin.cx} {pin.cy})">
            <circle r="39" fill={pin.color} filter="url(#drop-shadow)" />
            <circle r="32" fill="url(#poi-fill)" />
            <g transform="scale(.95)">{@render glyph(pin.icon, green)}</g>
          </g>
        {/if}
      {/each}

      <g fill="#4b5f3b">
        <path d="M54 771C55 776 51 781 46 781C45 776 49 772 54 771ZM47 783C49 783 51 781 55 781C58 781 60 783 61.5 785C55 789 56 797 62 800C60 804 57 807.5 54.5 807.5C52 807.5 51 806 47.5 806C44 806 43 807.5 40.5 807.5C36 807.5 32 800 32 793C32 785 37 781 41 781C44 781 45.5 783 47 783Z" />
        <text class="maps" x="65" y="807">Maps</text>
      </g>
      <a href="#legal" aria-label="Legal"><text class="legal" x="211" y="803">Legal</text></a>
    </svg>

    <section class="profile">
      <h2>Profil altimetrique</h2>
      <svg class="chart" viewBox="0 0 1074 424" role="img" aria-label="Profil altimetrique du parcours">
        <defs>
          <linearGradient id="slope" gradientUnits="userSpaceOnUse" x1="0" y1="24" x2="0" y2="366">
            <stop offset="0" stop-color="#ff3b30" stop-opacity=".28" />
            <stop offset=".5" stop-color="#eab308" stop-opacity=".4" />
            <stop offset="1" stop-color="#22c55e" stop-opacity=".5" />
          </linearGradient>
        </defs>
        <g class="grid">
          {#each elevations as [, y]}
            <path d="M129 {y}H1074" />
          {/each}
          {#each distances as km, i}
            <path d="M{Math.round(130 + i * 183.4)} 0V366" />
          {/each}
        </g>
        <polygon fill="url(#slope)" points="129,366 {profile} 1074,366" />
        <polyline class="curve" points={profile} />
        <g class="ticks">
          {#each elevations as [label, y]}
            <text x="115" y={y + 12} text-anchor="end">{label}</text>
          {/each}
          {#each distances as km, i}
            <text x={Math.round(142 + i * 183.4)} y="409">{km}</text>
          {/each}
        </g>
      </svg>
      <div class="stats">
        <span class="stat">
          <svg viewBox="0 0 32 32" aria-hidden="true"><path d="M16 2V29M5 18.5L16 29L27 18.5" /></svg>
          720 m min
        </span>
        <span class="stat">
          <svg viewBox="0 0 32 32" aria-hidden="true"><path d="M16 30V3M5 13.5L16 3L27 13.5" /></svg>
          1&#8201;988 m max
        </span>
        <span class="unit">km</span>
      </div>
    </section>

    <section class="card">
      <button class="summary" type="button" aria-expanded="false">
        <svg class="spot" viewBox="0 0 56 56" aria-hidden="true">
          <circle cx="28" cy="10" r="9.5" fill="#10b981" />
          <circle cx="25.5" cy="7" r="3.2" fill="#fff" />
          <path fill="#10b981" d="M25.5 18H30.5L30 38L28 46L26 38Z" />
          <path fill="none" stroke="#10b981" stroke-width="4.4" d="M34.5 36.5C43 37.5 49.5 40.5 49.5 44.5C49.5 49.5 40 52.8 28 52.8S6.5 49.5 6.5 44.5C6.5 40.5 13 37.5 21.5 36.5" />
        </svg>
        <span class="total">102 points d'interet</span>
        <svg class="chevron" viewBox="0 0 34 20" aria-hidden="true"><path d="M2 2L17 17L32 2" /></svg>
      </button>
      <div class="filters">
        <button class="chip all" type="button" aria-pressed="true">Tout</button>
        {#each filters as f}
          <button class="chip {f.tone}" type="button" aria-label="{f.label} {f.count}">
            <svg class={f.icon} viewBox="{-f.w / 2} {-f.h / 2} {f.w} {f.h}" aria-hidden="true">{@render glyph(f.icon, '#efedeb')}</svg>
            {f.count}
          </button>
        {/each}
      </div>
    </section>
  </main>
</div>

<style>
  :global(body) {
    background: #f2f1f7;
  }

  .screen {
    position: relative;
    min-height: 100vh;
    font-family: Inter, 'Liberation Sans', sans-serif;
    color: #000;
    background: #f2f1f7;
  }

  .backdrop {
    height: 141px;
  }

  .backdrop-map {
    position: absolute;
    inset: 0 0 auto;
    width: 100%;
    height: 320px;
  }

  .status {
    position: relative;
    display: flex;
    align-items: center;
    justify-content: space-between;
    height: 148px;
    padding: 0 52px 0 94px;
  }

  .time {
    font-size: 46px;
    font-weight: 600;
    line-height: 56px;
  }

  .signals {
    display: flex;
    align-items: center;
    gap: 16px;
  }

  .dots {
    width: 51px;
    height: 36px;
  }

  .wifi {
    width: 50px;
    height: 36px;
  }

  .battery {
    width: 76px;
    height: 38px;
  }

  .sheet {
    position: relative;
    overflow: hidden;
    min-height: calc(100vh - 141px);
    border-radius: 126px 126px 0 0;
    background: #f2f1f7;
  }

  .bar {
    display: grid;
    grid-template-columns: 1fr auto 1fr;
    align-items: center;
    padding: 49px 48px 30px;
  }

  button {
    margin: 0;
    border: 0;
    font: inherit;
    color: inherit;
    cursor: pointer;
  }

  .close {
    justify-self: start;
    height: 131px;
    padding: 0 46px;
    border: 2px solid #fff;
    border-radius: 66px;
    background: #fbfaff;
    box-shadow: 0 12px 64px rgb(0 0 0 / 9%);
    font-size: 49px;
    color: #10b981;
  }

  h1 {
    margin: 0;
    font-size: 49px;
    font-weight: 600;
    line-height: 60px;
  }

  .map {
    position: relative;
    display: block;
    width: 100%;
    height: auto;
  }

  .hills {
    mix-blend-mode: soft-light;
    opacity: 0.3;
  }

  .map polyline {
    fill: none;
  }

  .ridge {
    stroke: #85a969;
    stroke-width: 12;
    stroke-opacity: 0.6;
  }

  .river {
    stroke: #8cd8f0;
    stroke-width: 3;
    stroke-linejoin: round;
  }

  .border-band {
    stroke: #7cc47e;
    stroke-width: 16;
    stroke-opacity: 0.22;
  }

  .border {
    stroke: #62c05c;
    stroke-width: 2;
  }

  .track {
    stroke: #c6c8cb;
    stroke-width: 2;
    stroke-linejoin: round;
  }

  .road-edge {
    stroke: #a4b0b8;
    stroke-width: 8;
    stroke-linejoin: round;
  }

  .road {
    stroke: #c6d1d3;
    stroke-width: 5;
    stroke-linejoin: round;
  }

  .route {
    stroke: #ff383c;
    stroke-width: 13;
    stroke-linejoin: miter;
  }

  .heading {
    stroke: #fff;
    stroke-width: 6;
    stroke-linecap: round;
    stroke-linejoin: round;
  }

  .pin {
    color: #fff;
  }

  .more {
    fill: #fff;
    font-size: 24px;
    font-weight: 600;
    text-anchor: middle;
  }

  .place {
    fill: #48484a;
    stroke: #f4fbe9;
    stroke-width: 5;
    stroke-linejoin: round;
    paint-order: stroke;
    font-size: 33px;
    font-weight: 500;
  }

  .town {
    fill: #1c1c1e;
    font-size: 42px;
    font-weight: 600;
  }

  .maps {
    font-size: 45px;
    font-weight: 500;
  }

  .legal {
    fill: #5d7a48;
    font-size: 28px;
    font-weight: 600;
    text-decoration: underline;
  }

  .profile {
    padding: 48px 48px 0;
  }

  h2 {
    margin: 0 0 18px;
    font-size: 45px;
    font-weight: 600;
    line-height: 54px;
  }

  .chart {
    display: block;
    width: 100%;
    height: auto;
  }

  .grid {
    stroke: #000;
    stroke-opacity: 0.13;
    stroke-width: 2;
  }

  .curve {
    fill: none;
    stroke: #10b981;
    stroke-width: 5;
    stroke-linejoin: round;
  }

  .ticks {
    fill: #8a8a8e;
    font-size: 32px;
  }

  .stats {
    display: flex;
    align-items: center;
    gap: 48px;
    margin-top: 12px;
    font-size: 33px;
    line-height: 42px;
    color: #8a8a8e;
  }

  .stat {
    display: flex;
    align-items: center;
    gap: 26px;
  }

  .stat svg {
    width: 32px;
    height: 32px;
    fill: none;
    stroke: currentColor;
    stroke-width: 3;
    stroke-linecap: round;
    stroke-linejoin: round;
  }

  .unit {
    margin-left: auto;
  }

  .card {
    overflow: hidden;
    margin: 48px 48px 0;
    padding: 36px 0 24px;
    border-radius: 36px;
    background: #fff;
  }

  .summary {
    display: flex;
    align-items: center;
    gap: 24px;
    width: 100%;
    padding: 0 50px 0 48px;
    background: none;
    text-align: left;
  }

  .spot {
    width: 56px;
    height: 56px;
  }

  .total {
    flex: 1;
    font-size: 45px;
    font-weight: 600;
    line-height: 54px;
  }

  .chevron {
    width: 34px;
    height: 20px;
    fill: none;
    stroke: #8a8a8e;
    stroke-width: 3;
    stroke-linecap: round;
    stroke-linejoin: round;
  }

  .filters {
    display: flex;
    align-items: center;
    gap: 18px;
    height: 68px;
    margin-top: 33px;
    padding: 0 18px 0 48px;
  }

  .chip {
    display: flex;
    flex: none;
    align-items: center;
    gap: 12px;
    padding: 12px 26px;
    border-radius: 34px;
    font-size: 33px;
    line-height: 40px;
  }

  .all {
    padding: 12px 31px;
    background: #10b981;
    color: #fff;
    font-weight: 500;
  }

  .water {
    background: #e6f0ff;
    color: #3b82f6;
  }

  .shop {
    background: #f3eaff;
    color: #a855f7;
  }

  .food {
    background: #feede2;
    color: #f97316;
  }

  .camp {
    background: #e3f7ea;
    color: #22c55e;
  }

  .repair {
    background: #efedeb;
    color: #78716c;
  }

  .lodging {
    background: #ecedf1;
    color: #64748b;
  }

  .drop {
    width: 24px;
    height: 34px;
  }

  .fork {
    width: 24px;
    height: 42px;
  }

  .cart,
  .house {
    width: 38px;
    height: 34px;
  }

  .tent {
    width: 50px;
    height: 34px;
  }

  .tools {
    width: 38px;
    height: 44px;
  }
</style>
